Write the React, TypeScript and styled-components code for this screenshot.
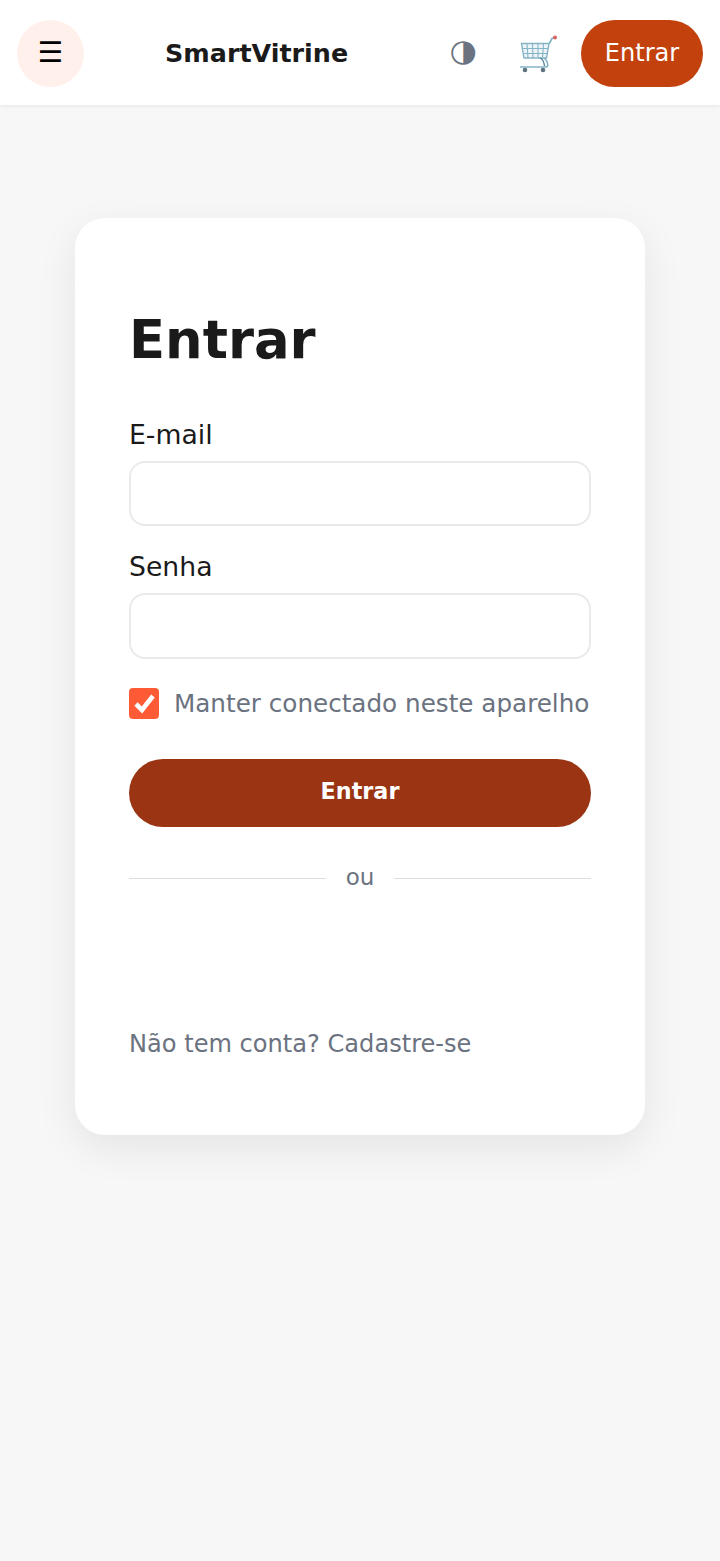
import React from "react";
import styled, { createGlobalStyle } from "styled-components";

const Global = createGlobalStyle`
  html, body { margin: 0; padding: 0; background: #f7f7f8; }
  body { font-family: "DejaVu Sans", sans-serif; }
  * { box-sizing: border-box; }
`;

const Page = styled.div`
  min-height: 1561px;
  background: #f7f7f8;
  display: flex;
  flex-direction: column;
`;

const Header = styled.header`
  height: 105px;
  background: #fff;
  box-shadow: 0 1px 4px rgba(0, 0, 0, 0.08);
  display: flex;
  align-items: center;
  padding: 2px 17px 0;
`;

const MenuButton = styled.button`
  width: 67px;
  height: 67px;
  border: 0;
  border-radius: 50%;
  background: #fff0ec;
  color: #000;
  font: 28.5px "DejaVu Sans", sans-serif;
  padding: 0 0 3px;
  display: flex;
  align-items: center;
  justify-content: center;
`;

const Brand = styled.div`
  margin-left: 81px;
  margin-top: -2px;
  font-size: 25.4px;
  font-weight: 700;
  color: #1a1a1a;
  flex: 1;
`;

const ThemeButton = styled.span`
  font-size: 31px;
  color: #6b7280;
  width: 30px;
  text-align: center;
  line-height: 1;
  margin-top: -7px;
`;

const CartSlot = styled.span`
  margin-left: 41px;
  margin-right: 22px;
  margin-top: 2px;
  display: flex;
`;

const LoginButton = styled.button`
  width: 122px;
  height: 67px;
  border: 0;
  border-radius: 33.5px;
  background: #c2410c;
  color: #fff;
  font: 24.1px "DejaVu Sans", sans-serif;
  padding: 0 0 2px;
`;

const Main = styled.main`
  display: flex;
  justify-content: center;
  padding-top: 113px;
`;

const Card = styled.section`
  width: 570px;
  height: 917px;
  background: #fff;
  border-radius: 30px;
  box-shadow: 0 13px 40px rgba(0, 0, 0, 0.08);
  padding: 84px 54px 0;
`;

const Title = styled.h1`
  margin: 0;
  font-size: 52.8px;
  line-height: 75px;
  font-weight: 700;
  color: #1a1a1a;
`;

const Label = styled.label`
  display: block;
  font-size: 26.7px;
  line-height: 34px;
  color: #1a1a1a;
  margin-bottom: 9px;
`;

const Field = styled.div`
  margin-top: ${(p: { $top: number }) => p.$top}px;
`;

const Input = styled.input`
  display: block;
  width: 100%;
  height: ${(p: { $height: number }) => p.$height}px;
  border: 2px solid #e9eaed;
  border-radius: 16px;
  background: #fff;
  outline: 0;
`;

const CheckRow = styled.div`
  display: flex;
  align-items: center;
  gap: 15px;
  margin-top: 28px;
  height: 32px;
`;

const CheckBox = styled.span`
  width: 30px;
  height: 31px;
  flex-shrink: 0;
  border-radius: 4px;
  background: #ff5a36;
  display: flex;
  align-items: center;
  justify-content: center;
`;

const Muted = styled.span`
  font-size: ${(p: { $size: number }) => p.$size}px;
  color: #6b7280;
  white-space: nowrap;
`;

const Submit = styled.button`
  display: block;
  width: 100%;
  height: 68px;
  margin-top: 40px;
  border: 0;
  border-radius: 34px;
  background: #9a3412;
  color: #fff;
  font: 700 22.3px "DejaVu Sans", sans-serif;
  padding: 0 0 4px;
`;

const Divider = styled.div`
  display: flex;
  align-items: center;
  gap: 20px;
  margin-top: 35px;
  height: 30px;
  font-size: 23px;
  color: #6b7280;
`;

const Rule = styled.span`
  flex: 1;
  height: 1px;
  background: #dcdee2;
  margin-top: 3px;
`;

const Footer = styled.div`
  margin-top: 135px;
  line-height: 34px;
`;

const Cart = () => (
  <svg width="40" height="40" viewBox="0 0 40 40" fill="none">
    <path d="M2.500 8.500H30L27.500 23H5Z" fill="#edf5f8" stroke="#86b3c6" strokeWidth="1.400" />
    <path
      d="M8 9 9 23M13.500 9l.5 14M19 9v14M24.500 9 23.500 23M3.500 13.500H29M4.400 18.500H28.200"
      stroke="#86b3c6"
      strokeWidth="1.100"
    />
    <path d="M30 9 33 3.500 35.500 2.500" stroke="#86b3c6" strokeWidth="1.700" />
    <circle cx="36" cy="2.500" r="2" fill="#d9635f" />
    <path d="M1 32H26C30 32 29 28 27 25L25 23" stroke="#86b3c6" strokeWidth="1.600" />
    <path d="M21 23c3 1 4 4 4.500 8" stroke="#4f8296" strokeWidth="1.300" />
    <circle cx="6" cy="35" r="2.300" fill="#5d7480" />
    <circle cx="24" cy="35" r="2.300" fill="#5d7480" />
  </svg>
);

const Check = () => (
  <svg width="23" height="21" viewBox="0 0 23 21" fill="none">
    <path d="M3 11 9 17 20 3" stroke="#fff" strokeWidth="4.600" />
  </svg>
);

export default function App() {
  return (
    <Page>
      <Global />
      <Header>
        <MenuButton>☰</MenuButton>
        <Brand>SmartVitrine</Brand>
        <ThemeButton>◑</ThemeButton>
        <CartSlot>
          <Cart />
        </CartSlot>
        <LoginButton>Entrar</LoginButton>
      </Header>
      <Main>
        <Card>
          <Title>Entrar</Title>
          <Field $top={41}>
            <Label>E-mail</Label>
            <Input type="email" $height={65} />
          </Field>
          <Field $top={24}>
            <Label>Senha</Label>
            <Input type="password" $height={66} />
          </Field>
          <CheckRow>
            <CheckBox>
              <Check />
            </CheckBox>
            <Muted $size={24.65}>Manter conectado neste aparelho</Muted>
          </CheckRow>
          <Submit>Entrar</Submit>
          <Divider>
            <Rule />
            <span>ou</span>
            <Rule />
          </Divider>
          <Footer>
            <Muted $size={24.1}>Não tem conta? Cadastre-se</Muted>
          </Footer>
        </Card>
      </Main>
    </Page>
  );
}
